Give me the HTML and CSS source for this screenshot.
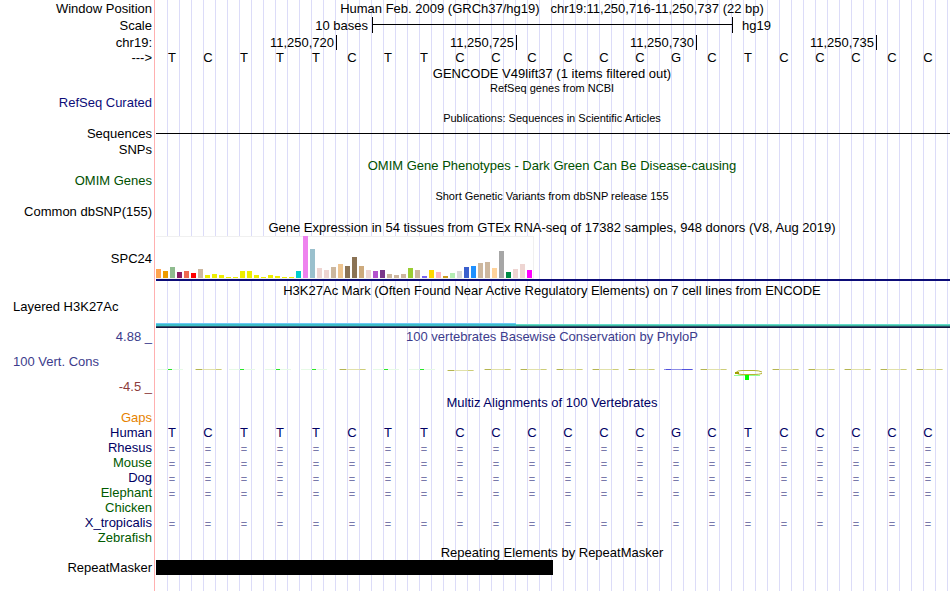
FILE: index.html
```html
<!DOCTYPE html>
<html lang="en">
<head>
<meta charset="utf-8">
<title>chr19:11,250,716-11,250,737</title>
<link rel="stylesheet" href="styles.css">
</head>
<body>
<main class="browser">
  <div class="row h16"><div class="label">Window Position</div><div class="track title pre">Human Feb. 2009 (GRCh37/hg19)   chr19:11,250,716-11,250,737 (22 bp)</div></div>
  <div class="row h18"><div class="label">Scale</div><div class="track scale"><span class="scale-from">10 bases</span><span class="scale-bar"></span><span class="scale-to">hg19</span></div></div>
  <div class="row h16"><div class="label">chr19:</div><div class="track ruler"><span>11,250,720</span><span>11,250,725</span><span>11,250,730</span><span>11,250,735</span></div></div>
  <div class="row h15"><div class="label">---&gt;</div><div class="track bases" data-seq="TCTTTCTTCCCCCCGCTCCCCC"></div></div>
  <div class="row h16"><div class="label"></div><div class="track title">GENCODE V49lift37 (1 items filtered out)</div></div>
  <div class="row h14"><div class="label"></div><div class="track title small">RefSeq genes from NCBI</div></div>
  <div class="row h15"><div class="label navy">RefSeq Curated</div><div class="track"></div></div>
  <div class="row h16"><div class="label"></div><div class="track title small">Publications: Sequences in Scientific Articles</div></div>
  <div class="row h15"><div class="label">Sequences</div><div class="track item"><span class="thin-line"></span></div></div>
  <div class="row h17"><div class="label">SNPs</div><div class="track"></div></div>
  <div class="row h15"><div class="label"></div><div class="track title green">OMIM Gene Phenotypes - Dark Green Can Be Disease-causing</div></div>
  <div class="row h15"><div class="label green">OMIM Genes</div><div class="track"></div></div>
  <div class="row h16"><div class="label"></div><div class="track title small">Short Genetic Variants from dbSNP release 155</div></div>
  <div class="row h15"><div class="label">Common dbSNP(155)</div><div class="track"></div></div>
  <div class="row h17"><div class="label"></div><div class="track title">Gene Expression in 54 tissues from GTEx RNA-seq of 17382 samples, 948 donors (V8, Aug 2019)</div></div>
  <div class="row"><div class="label">SPC24</div><div class="track expression"><div class="chart"></div><div class="gene-line"></div></div></div>
  <div class="row h19"><div class="label"></div><div class="track title">H3K27Ac Mark (Often Found Near Active Regulatory Elements) on 7 cell lines from ENCODE</div></div>
  <div class="row h28 top"><div class="label left">Layered H3K27Ac</div><div class="track signal"><div class="signal-a"></div><div class="signal-b"></div></div></div>
  <div class="row h17"><div class="label violet">4.88 _</div><div class="track title violet">100 vertebrates Basewise Conservation by PhyloP</div></div>
  <div class="row h50">
    <div class="label stack"><span class="left violet">100 Vert. Cons</span><span class="maroon">-4.5 _</span></div>
    <div class="track cons"><svg class="logo" width="796" height="50" viewBox="0 0 796 50" aria-hidden="true"></svg></div>
  </div>
  <div class="row h15"><div class="label"></div><div class="track title deep">Multiz Alignments of 100 Vertebrates</div></div>
  <div class="row h15"><div class="label orange">Gaps</div><div class="track"></div></div>
  <div class="row h15"><div class="label deep">Human</div><div class="track bases deep" data-seq="TCTTTCTTCCCCCCGCTCCCCC"></div></div>
  <div class="row h15"><div class="label deep">Rhesus</div><div class="track bases match" data-seq="======================"></div></div>
  <div class="row h15"><div class="label leaf">Mouse</div><div class="track bases match" data-seq="======================"></div></div>
  <div class="row h15"><div class="label deep">Dog</div><div class="track bases match" data-seq="======================"></div></div>
  <div class="row h15"><div class="label leaf">Elephant</div><div class="track bases match" data-seq="======================"></div></div>
  <div class="row h15"><div class="label leaf">Chicken</div><div class="track"></div></div>
  <div class="row h15"><div class="label deep">X_tropicalis</div><div class="track bases match" data-seq="======================"></div></div>
  <div class="row h15"><div class="label leaf">Zebrafish</div><div class="track"></div></div>
  <div class="row h15"><div class="label"></div><div class="track title">Repeating Elements by RepeatMasker</div></div>
  <div class="row h15"><div class="label">RepeatMasker</div><div class="track item"><span class="repeat"></span></div></div>
</main>
<script src="script.js"></script>
</body>
</html>
```

FILE: styles.css
```css
* { box-sizing: border-box; }
body {
  margin: 0;
  background: #fff;
  color: #000;
  font: 13px/15px "Liberation Sans", Arial, sans-serif;
}
/* red divider, blank gutter, then one guide line every 12px */
.browser {
  min-height: 100vh;
  overflow: hidden;
  padding-bottom: 16px;
  background:
    linear-gradient(#ffb0b0, #ffb0b0) 154px 0 / 1px 100% no-repeat,
    linear-gradient(#fff, #fff) 0 0 / 167px 100% no-repeat,
    linear-gradient(to right, #dcdcf8 1px, transparent 1px) 167px 0 / 12px 100%;
}
.row { display: grid; grid-template-columns: 154px minmax(0, 1fr); align-items: center; }
.h14 { height: 14px; }
.h15 { height: 15px; }
.h16 { height: 16px; }
.h17 { height: 17px; }
.h18 { height: 18px; }
.h19 { height: 19px; }
.h28 { height: 28px; }
.h50 { height: 50px; }
.top { align-items: start; line-height: 13px; }
.label { padding-right: 2px; text-align: right; white-space: nowrap; }
.left { padding-left: 13px; text-align: left; }
.stack { display: grid; grid-template-rows: 33px 17px; align-items: center; }
.title { text-align: center; white-space: nowrap; }
.pre { white-space: pre; }
.small { font-size: 11px; }

.navy { color: #0c0c78; }
.deep { color: #000064; }
.green { color: #005000; }
.leaf { color: #005a00; }
.violet { color: #3c3c8c; }
.maroon { color: #8c3c3c; }
.orange { color: #e68200; }

.scale { display: flex; align-items: center; }
.scale-from { width: 218px; padding-right: 4px; text-align: right; }
.scale-bar {
  width: 361px;
  height: 16px;
  border: solid #000;
  border-width: 0 1px;
  background: linear-gradient(#000, #000) 0 7px / 100% 1px no-repeat;
}
.scale-to { padding-left: 9px; }

.ruler { display: grid; grid-template-columns: 183px 180px 180px 180px; }
.ruler span { padding-right: 2px; border-right: 1px solid #000; text-align: right; }

.bases { display: grid; grid-template-columns: repeat(22, 36px); text-align: center; }
.match { color: #7878aa; font-size: 11px; align-self: end; line-height: 12px; }

.item { padding-left: 2px; }
.thin-line { display: block; height: 1px; background: #000; }
.repeat { display: block; width: 397px; height: 15px; background: #000; }

.expression { padding-left: 2px; }
.chart {
  display: flex;
  align-items: flex-end;
  gap: 2px;
  width: 378px;
  height: 43px;
  border: solid #f0f0f0;
  border-width: 1px 1px 1px 0;
  background: #fff;
}
.bar { width: 5px; flex: none; }
.gene-line { height: 2px; background: #0c0c78; }

.signal { display: grid; grid-template-columns: 360px 1fr; align-self: end; align-items: end; padding-left: 2px; }
.signal-a { height: 5px; background: linear-gradient(#6ec8f5 0 1px, #3cbec8 1px 3px, #285064 3px 4px, #14143c 4px); }
.signal-b { height: 4px; background: linear-gradient(#64dcc8 0 1px, #3cb4a0 1px 2px, #285064 2px 3px, #14143c 3px); }

.cons { overflow: hidden; }
.logo { display: block; }
```

FILE: script.js
```js
document.querySelectorAll('[data-seq]').forEach(function (track) {
  for (const base of track.dataset.seq) {
    const cell = document.createElement('span');
    cell.textContent = base;
    track.append(cell);
  }
});

// Expression level and colour of each tissue
const tissues = [
  [9, '#ffa54f'], [7, '#ee9a00'], [11, '#8fbc8f'], [6, '#8b1c62'], [7, '#ee6a50'], [5, '#ff0000'],
  [9, '#cdb79e'], [3, '#eeee00'], [4, '#eeee00'], [3, '#eeee00'], [1, '#eeee00'], [1, '#eeee00'],
  [7, '#eeee00'], [7, '#eeee00'], [3, '#eeee00'], [1, '#eeee00'], [3, '#eeee00'], [2, '#eeee00'],
  [1, '#eeee00'], [1, '#eeee00'], [7, '#00cdcd'], [42, '#ee82ee'], [29, '#9ac0cd'], [10, '#eed5d2'],
  [8, '#eed5d2'], [11, '#cdb79e'], [14, '#eec591'], [12, '#8b7355'], [21, '#8b7355'], [12, '#cdaa7d'],
  [8, '#eed5d2'], [7, '#b452cd'], [8, '#7a378b'], [4, '#cdb79e'], [3, '#cdb79e'], [4, '#cdb79e'],
  [10, '#9acd32'], [8, '#cdb79e'], [2, '#7a67ee'], [8, '#ffd700'], [6, '#ffb6c1'], [2, '#cd9b1d'],
  [5, '#b4eeb4'], [7, '#d9d9d9'], [11, '#3a5fcd'], [12, '#1e90ff'], [15, '#cdb79e'], [16, '#cdb79e'],
  [10, '#ffd39b'], [27, '#a6a6a6'], [6, '#008b45'], [9, '#eed5d2'], [14, '#eed5d2'], [8, '#ff00ff']
];
const chart = document.querySelector('.chart');
tissues.forEach(function (tissue) {
  const bar = document.createElement('span');
  bar.className = 'bar';
  bar.style.height = tissue[0] + 'px';
  bar.style.background = tissue[1];
  chart.append(bar);
});

// Flattened base letters of the conservation logo
let marks = '';
[...'TCTTTCTTCCCCCCGCTCCCCC'].forEach(function (base, i) {
  const x = (i > 8 ? 4 : 3) + i * 36;
  const rect = (dx, y, w, h, fill) =>
    '<rect x="' + (x + dx) + '" y="' + y + '" width="' + w + '" height="' + h + '" fill="' + fill + '"/>';
  if (i === 16) {
    marks += '<path d="M' + (x + 28) + ' 27Q' + (x + 25) + ' 25.5 ' + (x + 20) + ' 25.5H' + (x + 8) + 'Q' + (x + 3) + ' 25.5 ' + (x + 2) +
      ' 27.5Q' + (x + 3) + ' 29.5 ' + (x + 8) + ' 29.5H' + (x + 20) + 'Q' + (x + 25) + ' 29.5 ' + (x + 28) + ' 28.5" fill="none" stroke="#b4b432"/>';
    marks += rect(1, 27, 4, 2, '#a0a000') + rect(0, 30, 26, 1, '#96ff96') + rect(11, 30, 4, 5, '#00ff00');
  } else if (base === 'T') {
    marks += rect(0, 24, 26, 1, '#e6fae6') + rect(11, 24, 4, 1, '#28e628');
  } else if (base === 'G') {
    marks += rect(2, 24, 29, 1, '#8c8ce6') + rect(4, 24, 5, 1, '#5050dc') + rect(20, 24, 10, 1, '#5050dc');
  } else {
    const y = i === 8 ? 25 : 24;
    marks += rect(2, y, 27, 1, '#e1e1aa') + rect(3, y, 6, 1, '#b4b450') + rect(23, y, 5, 1, '#cdcd78');
  }
});
document.querySelector('.logo').innerHTML = marks;
```
